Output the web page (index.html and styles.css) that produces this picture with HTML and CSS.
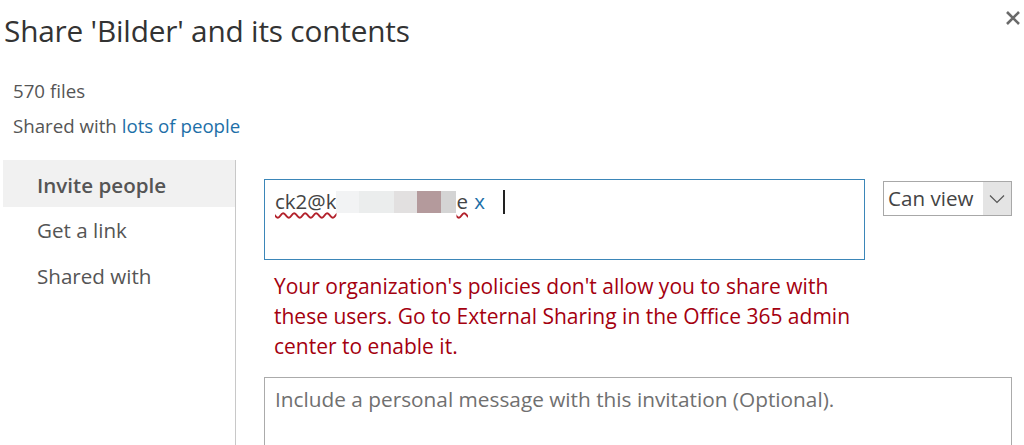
FILE: index.html
```html
<!DOCTYPE html>
<html lang="en">
<head>
<meta charset="utf-8">
<title>Share</title>
<link rel="stylesheet" href="styles.css">
</head>
<body>
<div class="dialog">
  <header class="head">
    <h1 class="title">Share 'Bilder' and its contents</h1>
    <span class="close" aria-label="Close">
      <svg width="16" height="16" viewBox="0 0 16 16"><path d="M2 2 L14 14 M14 2 L2 14" stroke="#6a6a6a" stroke-width="2.6" fill="none"/></svg>
    </span>
  </header>
  <div class="meta">
    <div class="count">570 files</div>
    <div class="shared">Shared with <a class="link" href="#">lots of people</a></div>
  </div>
  <div class="main">
    <nav class="nav">
      <div class="nav-item active">Invite people</div>
      <div class="nav-item">Get a link</div>
      <div class="nav-item">Shared with</div>
    </nav>
    <section class="content">
      <div class="invite-row">
        <div class="people">
          <span class="token"><span class="addr">ck2@k<span class="blur"><i class="b1"></i><i class="b2"></i><i class="b3"></i><i class="b4"></i><i class="b5"></i></span>e</span> <span class="remove">x</span></span>
          <span class="caret"></span>
        </div>
        <div class="perm">
          <span class="perm-label">Can view</span>
          <span class="perm-arrow"><svg width="16" height="10" viewBox="0 0 16 10"><path d="M1 1.5 L8 8.5 L15 1.5" stroke="#555" stroke-width="1.2" fill="none"/></svg></span>
        </div>
      </div>
      <p class="error">Your organization's policies don't allow you to share with these users. Go to External Sharing in the Office 365 admin center to enable it.</p>
      <div class="message">Include a personal message with this invitation (Optional).</div>
    </section>
  </div>
</div>
</body>
</html>
```
FILE: styles.css
```css
html, body {
  margin: 0;
  padding: 0;
  background: #fff;
  overflow: hidden;
}
body {
  font-family: "Open Sans", "Noto Sans", "Liberation Sans", sans-serif;
  color: #444;
}
.dialog {
  width: 1024px;
  height: 445px;
  overflow: hidden;
}
.head {
  display: flex;
  justify-content: space-between;
  align-items: flex-start;
  height: 62px;
}
.title {
  margin: 11px 0 0 4px;
  font-size: 29.8px;
  font-weight: 400;
  color: #333;
  line-height: 40px;
  letter-spacing: -0.2px;
}
.close {
  display: block;
  margin: 10px 3px 0 0;
  width: 16px;
  height: 16px;
}
.close svg { display: block; }
.meta {
  padding-left: 13px;
  font-size: 18.7px;
  color: #555;
}
.count {
  line-height: 22px;
  padding-top: 18px;
  box-sizing: border-box;
  height: 38px;
}
.shared {
  line-height: 24px;
  padding-top: 14px;
  height: 60px;
  box-sizing: border-box;
}
.link {
  color: #1d6fa8;
  text-decoration: none;
}
.main {
  display: flex;
  height: 285px;
}
.nav {
  width: 232px;
  margin-left: 3px;
  border-right: 1px solid #c8c8c8;
  font-size: 20.6px;
  color: #555;
}
.nav-item {
  height: 46px;
  line-height: 46px;
  padding-left: 34px;
}
.nav-item.active {
  background: #f1f1f1;
  height: 47px;
  line-height: 50px;
  font-weight: 600;
}
.content {
  padding-left: 28px;
  padding-top: 19px;
  flex: 1;
}
.invite-row {
  display: flex;
  align-items: flex-start;
}
.people {
  border: 1px solid #3b86b8;
  display: flex;
  align-items: flex-start;
  padding: 8px 0 0 10px;
  box-sizing: content-box;
  width: 589px;
  height: 71px;
  font-size: 20.5px;
  color: #444;
}
.token {
  line-height: 26px;
}
.addr {
  text-decoration: underline wavy #b3222c;
  text-decoration-thickness: 1.5px;
  text-underline-offset: 3px;
}
.blur {
  display: inline-flex;
  vertical-align: -4px;
  height: 22px;
}
.blur i { display: block; height: 22px; }
.b1 { width: 23px; background: #f2f3f4; }
.b2 { width: 35px; background: #ebeded; }
.b3 { width: 23px; background: #e2e0e0; }
.b4 { width: 24px; background: #b49a9c; }
.b5 { width: 15px; background: #d4d4d4; }
.remove {
  color: #1d6fa8;
  margin-left: 1px;
}
.caret {
  display: block;
  width: 2px;
  height: 24px;
  background: #222;
  margin: 2px 0 0 18px;
}
.perm {
  margin-left: 18px;
  margin-top: 2px;
  display: flex;
  border: 1px solid #a8a8a8;
  height: 33px;
  width: 127px;
  font-size: 20.6px;
  color: #444;
}
.perm-label {
  flex: 1;
  padding-left: 4px;
  line-height: 32px;
}
.perm-arrow {
  width: 28px;
  background: #e4e4e4;
  display: flex;
  align-items: center;
  justify-content: center;
}
.error {
  margin: 11px 0 0 10px;
  width: 590px;
  font-size: 21px;
  line-height: 30px;
  color: #a4000f;
}
.message {
  margin-top: 16px;
  width: 748px;
  box-sizing: border-box;
  height: 80px;
  border: 1px solid #ababab;
  border-bottom: 0;
  padding: 6px 10px;
  font-size: 20.8px;
  color: #707070;
  line-height: 30px;
}
```
